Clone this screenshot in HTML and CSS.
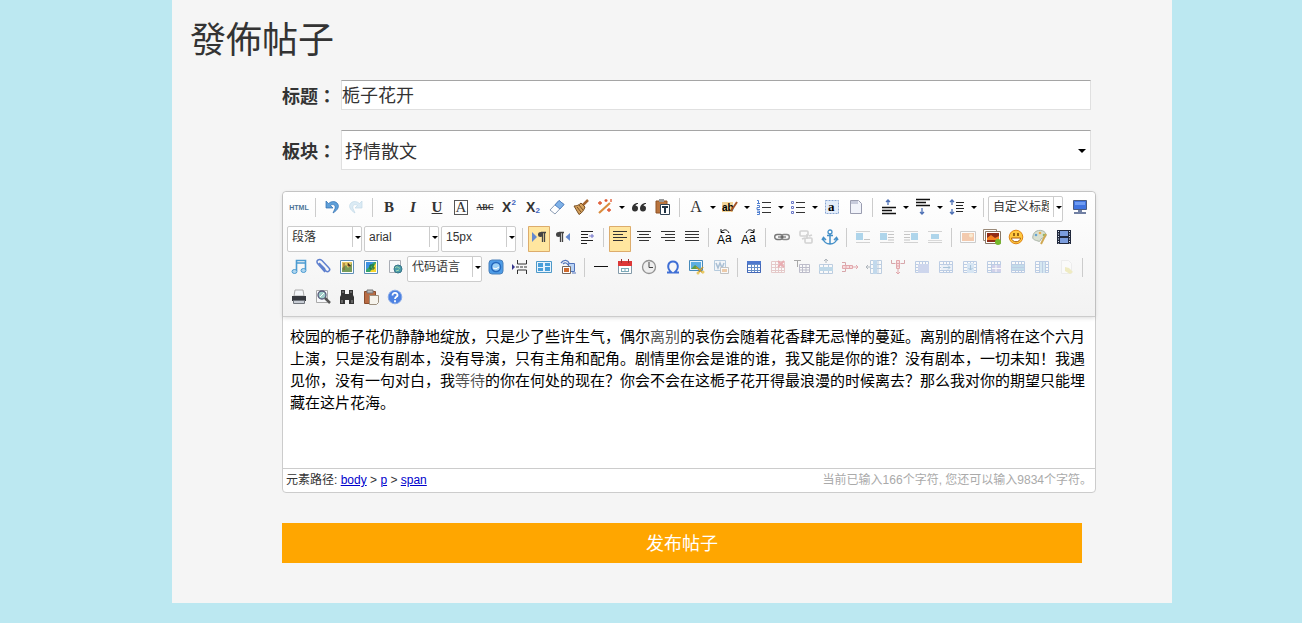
FILE: index.html
```html
<!DOCTYPE html>
<html lang="zh-CN">
<head>
<meta charset="utf-8">
<title>發佈帖子</title>
<link rel="stylesheet" href="styles.css">
</head>
<body>
<svg class="defs" aria-hidden="true">
  <symbol id="grid" viewBox="0 0 16 16"><path d="M1.500 2.500h13v11h-13zM1.500 5.500h13M1.500 8.500h13M1.500 11.500h13M5.500 3v11M8.500 3v11M11.500 3v11" fill="#fff" stroke="currentColor"/></symbol>
  <symbol id="wrapbox" viewBox="0 0 16 16"><path d="M1 2.500h14M1 13.500h14" stroke="#999"/></symbol>
</svg>
<main class="panel">
  <h1 class="title">發佈帖子</h1>
  <form class="form">
    <div class="field"><label class="label" lang="zh-TW" for="subject">标题：</label><input class="input" id="subject" type="text" value="栀子花开"></div>
    <div class="field">
      <label class="label" lang="zh-TW" for="board">板块：</label>
      <span class="board"><select class="board-select" id="board"><option>抒情散文</option></select></span>
    </div>
    <section class="editor">
      <div class="toolbar">
        <div class="row">
          <button type="button" class="btn html" title="源代码">HTML</button>
          <i class="sep"></i>
          <button type="button" class="btn" title="撤销"><svg viewBox="0 0 16 16"><path d="M2 2v7h7L6.500 6.500C9 4.500 12 6 11 9.500L9 14c5-3 7-7 4-10-3-2.500-6-1.500-8.500.5z" fill="#5f9fd8" stroke="#2f6fb0" stroke-width=".7"/></svg></button>
          <button type="button" class="btn off" title="重做"><svg viewBox="0 0 16 16"><path d="M14 2v7H7l2.500-2.500C7 4.500 4 6 5 9.500L7 14C2 11 0 7 3 4c3-2.500 6-1.500 8.500.5z" fill="#a9d0e8" stroke="#6ba5c8" stroke-width=".7"/></svg></button>
          <i class="sep"></i>
          <button type="button" class="btn glyph bold" title="加粗">B</button>
          <button type="button" class="btn glyph italic" title="斜体">I</button>
          <button type="button" class="btn glyph under" title="下划线">U</button>
          <button type="button" class="btn glyph" title="字符边框"><span class="framed">A</span></button>
          <button type="button" class="btn strike" title="删除线">ABC</button>
          <button type="button" class="btn script" title="上标">X<sup>2</sup></button>
          <button type="button" class="btn script" title="下标">X<sub>2</sub></button>
          <button type="button" class="btn" title="清除格式"><svg viewBox="0 0 16 16"><path d="M1 11l9-9.500 5 4L6 15z" fill="#fff" stroke="#8c9db5"/><path d="M6 6l4-4.500 5 4L11 10z" fill="#7fb2e8" stroke="#5585c5"/></svg></button>
          <button type="button" class="btn" title="格式刷"><svg viewBox="0 0 16 16"><path d="M15 1l-5 5" stroke="#a5652f" stroke-width="2.500"/><path d="M1 7c3 0 5-1 7-3l4 4c-1 3-3 6-6 7.500z" fill="#d5a15c" stroke="#7a5126"/><path d="M4 8l4 5M6 6l4 5" stroke="#7a5126"/></svg></button>
          <button type="button" class="btn" title="自动排版"><svg viewBox="0 0 16 16"><path d="M2 14L13 4" stroke="#d98b3d" stroke-width="2.200"/><path d="M3 2v4M1 4h4M9 0v3M7.500 1.500h3M12 9v4M10 11h4M14 0v3" stroke="#e0562f" stroke-width="1.300"/></svg></button><button type="button" class="drop" aria-label="排版选项"></button>
          <button type="button" class="btn" title="引用"><svg viewBox="0 0 16 16"><path d="M7 4C3 4 1 6.500 1 9.500a3 3 0 1 0 3.500-3C5 5.500 6 5 7 5zM15 4c-4 0-6 2.500-6 5.500a3 3 0 1 0 3.500-3c.5-1 1.500-1.500 2.500-1.500z" fill="#333"/></svg></button>
          <button type="button" class="btn" title="纯文本粘贴"><svg viewBox="0 0 16 16"><path d="M1 2h11v12H1z" fill="#b9743e" stroke="#8e5225"/><path d="M4 0h5v3H4z" fill="#999"/><path d="M5.500 5.500h9v10h-9z" fill="#fff" stroke="#345"/><path d="M7 8h6M10 8v6" stroke="#234" stroke-width="2"/></svg></button>
          <i class="sep"></i>
          <button type="button" class="btn glyph plain" title="字体颜色">A</button><button type="button" class="drop" aria-label="选择字体颜色"></button>
          <button type="button" class="btn" title="背景色"><svg viewBox="0 0 16 16"><rect y="3" width="11" height="10" fill="#f4d69a"/><text x="0" y="12" class="t-ab">ab</text><path d="M15 3L9 12" stroke="#a6562a" stroke-width="2"/></svg></button><button type="button" class="drop" aria-label="选择背景色"></button>
          <button type="button" class="btn" title="有序列表"><svg viewBox="0 0 16 16"><path d="M6 3.500h9M6 8.500h9M6 13.500h9" stroke="#333"/><path d="M1 1.500h1.500v3M1 4.500h3M1 6.500h2.500v2H1v2h3M1 12h2.500v3.500H1M1 13.500h2" fill="none" stroke="#4f7fd0"/></svg></button><button type="button" class="drop" aria-label="有序列表样式"></button>
          <button type="button" class="btn" title="无序列表"><svg viewBox="0 0 16 16"><path d="M6 3.500h9M6 8.500h9M6 13.500h9" stroke="#333"/><path d="M1.500 2.500h2v2h-2zM1.500 7.500h2v2h-2zM1.500 12.500h2v2h-2z" fill="#fff" stroke="#6b78c8"/></svg></button><button type="button" class="drop" aria-label="无序列表样式"></button>
          <button type="button" class="btn" title="全选"><svg viewBox="0 0 16 16"><path d="M1.500 1.500h13v13h-13z" fill="#e3edfa" stroke="#8ba6d3" stroke-dasharray="2 1"/><text x="4" y="12" class="t-a">a</text></svg></button>
          <button type="button" class="btn" title="清空文档"><svg viewBox="0 0 16 16"><path d="M2.500 1.500h8l3 3v10h-11z" fill="#f1f3fa" stroke="#9a9db0"/><path d="M3 2h7v3H3z" fill="#c7cbdc"/></svg></button>
          <i class="sep"></i>
          <button type="button" class="btn" title="段前距"><svg viewBox="0 0 16 16"><path d="M1 8.500h14M1 11.500h10M1 14.500h14" stroke="#111" stroke-width="1.300"/><path d="M7 6V1M5 3l2-2 2 2" fill="none" stroke="#4d70b5" stroke-width="1.300"/></svg></button><button type="button" class="drop" aria-label="段前距选项"></button>
          <button type="button" class="btn" title="段后距"><svg viewBox="0 0 16 16"><path d="M1 .5h14M1 3.500h10M1 6.500h14" stroke="#111" stroke-width="1.300"/><path d="M7 9v6M5 13l2 2 2-2" fill="none" stroke="#4d70b5" stroke-width="1.300"/></svg></button><button type="button" class="drop" aria-label="段后距选项"></button>
          <button type="button" class="btn" title="行间距"><svg viewBox="0 0 16 16"><path d="M7 3.500h8M7 6.500h7M7 9.500h8M7 12.500h7" stroke="#222"/><path d="M3 1v5M3 10v5M1 3l2-2 2 2M1 13l2 2 2-2" fill="none" stroke="#4d70b5" stroke-width="1.300"/></svg></button><button type="button" class="drop" aria-label="行间距选项"></button>
          <i class="sep"></i>
          <span class="combo"><select aria-label="自定义标题"><option>自定义标题</option></select></span>
          <button type="button" class="btn last" title="全屏"><svg viewBox="0 0 16 16"><path d="M1.500 1.500h13v9h-13z" fill="#3f73e0" stroke="#4b5b80"/><path d="M3 3h10v3H3z" fill="#6f9cf3"/><path d="M6 11h4v2H6zM2 13h12v2H2z" fill="#7180a3"/></svg></button>
        </div>
        <div class="row">
          <span class="combo"><select aria-label="段落格式"><option>段落</option></select></span>
          <span class="combo"><select aria-label="字体"><option>arial</option></select></span>
          <span class="combo"><select aria-label="字号"><option>15px</option></select></span>
          <i class="sep"></i>
          <button type="button" class="btn on" title="从左向右输入"><svg viewBox="0 0 16 16"><path d="M1 3l5 5-5 5z" fill="#6489ce"/><path d="M15 3.500H10M11.500 3v10M13.500 3v10" stroke="#444" stroke-width="1.300"/><circle cx="9.500" cy="5.500" r="2.500" fill="#444"/></svg></button>
          <button type="button" class="btn" title="从右向左输入"><svg viewBox="0 0 16 16"><path d="M15 4l-4.500 4 4.500 4z" fill="#6489ce"/><path d="M9 3.500H4M5.500 3v10M7.500 3v10" stroke="#444" stroke-width="1.300"/><circle cx="3.500" cy="5.500" r="2.500" fill="#444"/></svg></button>
          <button type="button" class="btn" title="首行缩进"><svg viewBox="0 0 16 16"><path d="M2 2.500h12M2 5.500h7M2 8.500h7M2 11.500h12M2 14.500h6" stroke="#222"/><path d="M10 7h5M13 5v4" stroke="#7073c9"/></svg></button>
          <i class="sep"></i>
          <button type="button" class="btn on" title="居左对齐"><svg viewBox="0 0 16 16"><path d="M1 2.500h14M1 5.500h10M1 8.500h14M1 11.500h10" stroke="#333"/></svg></button>
          <button type="button" class="btn" title="居中对齐"><svg viewBox="0 0 16 16"><path d="M1 2.500h14M3 5.500h10M1 8.500h14M3 11.500h10" stroke="#333"/></svg></button>
          <button type="button" class="btn" title="居右对齐"><svg viewBox="0 0 16 16"><path d="M1 2.500h14M5 5.500h10M1 8.500h14M5 11.500h10" stroke="#333"/></svg></button>
          <button type="button" class="btn" title="两端对齐"><svg viewBox="0 0 16 16"><path d="M1 2.500h14M1 5.500h14M1 8.500h14M1 11.500h14" stroke="#333"/></svg></button>
          <i class="sep"></i>
          <button type="button" class="btn" title="字母大写"><svg viewBox="0 0 16 16"><text x="0" y="15" class="t-case">A</text><text x="8" y="13" class="t-case">a</text><path d="M12 4C10 0 7 0 4 3M4 0v3.500h3.500" fill="none" stroke="#111"/></svg></button>
          <button type="button" class="btn" title="字母小写"><svg viewBox="0 0 16 16"><text x="0" y="15" class="t-case">A</text><text x="8" y="13" class="t-case">a</text><path d="M5 4C7 0 10 0 13 3M13 0v3.500H9.500" fill="none" stroke="#111"/></svg></button>
          <i class="sep"></i>
          <button type="button" class="btn" title="超链接"><svg viewBox="0 0 16 16"><rect x=".7" y="5.500" width="8" height="5" rx="2.500" fill="none" stroke="#777" stroke-width="1.400"/><rect x="7.300" y="5.500" width="8" height="5" rx="2.500" fill="none" stroke="#888" stroke-width="1.400"/><path d="M4 8h8" stroke="#555"/></svg></button>
          <button type="button" class="btn off" title="取消链接"><svg viewBox="0 0 16 16"><rect x="2" y="2" width="8" height="5" rx="1" fill="none" stroke="#999" stroke-width="1.600"/><rect x="7" y="9" width="7" height="5" rx="1" fill="none" stroke="#999" stroke-width="1.600"/><path d="M9 5v5M11 7l3-1M4 10l3-1" stroke="#999" stroke-width="1.600"/></svg></button>
          <button type="button" class="btn" title="锚点"><svg viewBox="0 0 16 16"><path d="M8 5v10M5 6.500h6M1 9c1 8 13 8 14 0M0 11l1.500-2.500L4 11M12 11l2.500-2.500L16 11" fill="none" stroke="#4590c8" stroke-width="1.500"/><circle cx="8" cy="3" r="2" fill="#fff" stroke="#4590c8" stroke-width="1.300"/></svg></button>
          <i class="sep"></i>
          <button type="button" class="btn off" title="默认浮动"><svg viewBox="0 0 16 16"><use href="#wrapbox"/><path d="M1 4h7v7H1z" fill="#3f9fd5"/><path d="M9 10.500h6" stroke="#777"/></svg></button>
          <button type="button" class="btn off" title="左浮动"><svg viewBox="0 0 16 16"><use href="#wrapbox"/><path d="M1 4h7v7H1z" fill="#3f9fd5"/><path d="M9 5.500h6M9 8.500h6M9 11h6" stroke="#777"/></svg></button>
          <button type="button" class="btn off" title="右浮动"><svg viewBox="0 0 16 16"><use href="#wrapbox"/><path d="M8 4h7v7H8z" fill="#3f9fd5"/><path d="M1 5.500h6M1 8.500h6M1 11h6" stroke="#777"/></svg></button>
          <button type="button" class="btn off" title="居中"><svg viewBox="0 0 16 16"><use href="#wrapbox"/><path d="M4 5h8v5H4z" fill="#3f9fd5"/><path d="M1 11.500h14" stroke="#aaa"/></svg></button>
          <i class="sep"></i>
          <button type="button" class="btn off" title="单图上传"><svg viewBox="0 0 16 16"><path d="M.5 2.500h15v11H.5z" fill="#fff" stroke="#888"/><path d="M2 4h12v8H2z" fill="#e9843f"/><circle cx="11" cy="6.500" r="2" fill="#f8d393"/></svg></button>
          <button type="button" class="btn" title="多图上传"><svg viewBox="0 0 16 16"><path d="M-.5 .5h13v11h-13z" fill="#fff" stroke="#987"/><path d="M1.500 2.500h15v12h-15z" fill="#fff" stroke="#876"/><path d="M3 4h12v9H3z" fill="#922c16"/><path d="M3 9l4-3 4 3 4-2v4H3z" fill="#f58220"/><circle cx="14" cy="13" r="3" fill="#75b82b"/></svg></button>
          <button type="button" class="btn" title="表情"><svg viewBox="0 0 16 16"><circle cx="8" cy="8" r="6.800" fill="#ffc83e" stroke="#df8515"/><path d="M3.500 9h9c-.5 5-8.500 5-9 0z" fill="#fff" stroke="#aa5c08"/><path d="M6 4v3M10 4v3" stroke="#754304" stroke-width="1.500"/></svg></button>
          <button type="button" class="btn" title="涂鸦"><svg viewBox="0 0 16 16"><path d="M1 7c1-8 14-7 13 0-1 3-4 1-5 3s-1 3-3 2C2 11 0 10 1 7z" fill="#d9e0d0" stroke="#aab4a7"/><circle cx="4" cy="6" r="1.300" fill="#66a3d2"/><circle cx="8" cy="4" r="1.300" fill="#edae4e"/><circle cx="12" cy="6" r="1.300" fill="#8fb86a"/><path d="M14 5L9 15" stroke="#d0a953" stroke-width="2"/></svg></button>
          <button type="button" class="btn" title="视频"><svg viewBox="0 0 16 16"><path d="M1 1h14v14H1z" fill="#20283c"/><path d="M4 2h8v5H4zM4 9h8v5H4z" fill="#7b9ddd"/><path d="M2.500 2v13M13.500 2v13" stroke="#dfe6f3" stroke-dasharray="1 1.500"/></svg></button>
        </div>
        <div class="row">
          <button type="button" class="btn" title="音乐"><svg viewBox="0 0 16 16"><path d="M5.500 12V1.500h9V11M5.500 4h9" fill="none" stroke="#4b9bd1" stroke-width="1.600"/><ellipse cx="3.500" cy="12.500" rx="2.500" ry="2" fill="#aed5ef" stroke="#4b9bd1"/><ellipse cx="12.500" cy="11.500" rx="2.500" ry="2" fill="#aed5ef" stroke="#4b9bd1"/></svg></button>
          <button type="button" class="btn" title="附件"><svg viewBox="0 0 16 16"><path d="M5 5l6 7c2 2 5-1 3-3L7 1.500C4-1 0 2 3 5l7 8M4 4l6 6" fill="none" stroke="#5f80ce" stroke-width="1.500"/></svg></button>
          <button type="button" class="btn" title="地图"><svg viewBox="0 0 16 16"><path d="M1.500 1.500h13v13h-13z" fill="#fff" stroke="#5e8eb8"/><path d="M3 3h10v10H3z" fill="#e4c967"/><path d="M3 9l4-3 2 3 4-5v9H3z" fill="#799c58"/><path d="M5 4v7M9 4v3h3" stroke="#8d5a2c"/></svg></button>
          <button type="button" class="btn" title="谷歌地图"><svg viewBox="0 0 16 16"><path d="M1.500 1.500h13v13h-13z" fill="#fff" stroke="#5e8eb8"/><path d="M3 3h10v10H3z" fill="#37a66a"/><path d="M3 3h8L3 11z" fill="#3e92e3"/><path d="M13 4v9H7z" fill="#f5d52e"/><path d="M11 6H7v4h4V8H9" fill="none" stroke="#186635"/></svg></button>
          <button type="button" class="btn" title="插入框架"><svg viewBox="0 0 16 16"><path d="M2.500 1.500h11v12h-11z" fill="#f7f8fb" stroke="#a9adb5"/><circle cx="11" cy="10" r="4" fill="#4b9caa" stroke="#38758a"/><path d="M8 9c2-3 4 1 5 0M9 12l3-1" fill="none" stroke="#a9dfb1"/></svg></button>
          <span class="combo"><select aria-label="代码语言"><option>代码语言</option></select></span>
          <button type="button" class="btn" title="百度应用"><svg viewBox="0 0 16 16"><rect x="1" y="1" width="14" height="14" rx="3" fill="#4d9be6" stroke="#4a80ba"/><circle cx="8" cy="8" r="4.500" fill="#9bd0f6" stroke="#2468bd" stroke-width="1.500"/><path d="M5 9q3 2 6-1" fill="none" stroke="#fff"/></svg></button>
          <button type="button" class="btn" title="分页"><svg viewBox="0 0 16 16"><path d="M5.500 1v4h9V1M5.500 15v-4h9v4" fill="none" stroke="#333"/><path d="M4 8h11" stroke="#333" stroke-dasharray="3 1"/><path d="M0 5l3 3-3 3z" fill="#37378d"/></svg></button>
          <button type="button" class="btn" title="模板"><svg viewBox="0 0 16 16"><path d="M.5 2.500h15v11H.5z" fill="#e8f3fd" stroke="#4d99c8"/><path d="M2 4h5v4H2zM9 4h5v3H9zM2 9h5v3H2zM9 8h5v4H9z" fill="#499fda"/></svg></button>
          <button type="button" class="btn" title="背景"><svg viewBox="0 0 16 16"><path d="M1 4c3-4 7-3 8 0M3 5c2-2 4-1 5 1" fill="none" stroke="#5275bb" stroke-width="1.300"/><path d="M8.500 4.500h6v8h-6z" fill="#b9d3f5" stroke="#5275bb"/><path d="M2.500 7.500h8v7h-8z" fill="#fff" stroke="#76685f"/><path d="M4 9h5v4H4z" fill="#d06b2e"/><path d="M12 14h4" stroke="#5275bb"/></svg></button>
          <i class="sep"></i>
          <button type="button" class="btn" title="分隔线"><svg viewBox="0 0 16 16"><path d="M1 7.500h14" stroke="#111"/></svg></button>
          <button type="button" class="btn" title="日期"><svg viewBox="0 0 16 16"><path d="M1.500 2.500h13v12h-13z" fill="#fff" stroke="#839aa9"/><path d="M1 2h14v5H1z" fill="#dd3737"/><path d="M4.500 0v4M11.500 0v4" stroke="#963030"/><path d="M4 9.500h8M4 12.500h8M4.500 9v4M8 9v4M11.500 9v4" stroke="#7caab8"/></svg></button>
          <button type="button" class="btn" title="时间"><svg viewBox="0 0 16 16"><circle cx="8" cy="8" r="6.500" fill="#eee" stroke="#929292" stroke-width="1.300"/><path d="M8 3v5.500h4" fill="none" stroke="#444"/></svg></button>
          <button type="button" class="btn" title="特殊字符"><svg viewBox="0 0 16 16"><path d="M2 13.500h4.500C1 9 3 2.500 8 2.500s7 6.500 1.500 11H14" fill="none" stroke="#3f6fd5" stroke-width="2"/></svg></button>
          <button type="button" class="btn" title="截图"><svg viewBox="0 0 16 16"><path d="M.5 1.500h13v10H.5z" fill="#eaf3fb" stroke="#478abb"/><path d="M2 3h10v7H2z" fill="#5daee2"/><path d="M2 10l4-4 5 4z" fill="#5e9d46"/><path d="M7 8l7 6M14 8l-5 6" stroke="#c19530" stroke-width="1.500"/><circle cx="9" cy="14" r="1.500" fill="#e9ca63"/><circle cx="14" cy="13" r="1.500" fill="#e9ca63"/></svg></button>
          <button type="button" class="btn off" title="图片转存"><svg viewBox="0 0 16 16"><path d="M1.500 1.500h11v10h-11z" fill="#eef4fb" stroke="#558ab9"/><path d="M3 4l2 5 2-5 2 5 2-5" fill="none" stroke="#376da1" stroke-width="1.500"/><path d="M7.500 8.500h8v6h-8z" fill="#fff" stroke="#777"/><path d="M9 10h5v3H9z" fill="#df8b39"/></svg></button>
          <i class="sep"></i>
          <button type="button" class="btn blue" title="插入表格"><svg viewBox="0 0 16 16"><use href="#grid"/><path d="M1.500 2.500h13v11h-13z" fill="none" stroke="#4468b8"/><path d="M1 2h14v3H1z" fill="#4e79ce"/></svg></button>
          <button type="button" class="btn off red" title="删除表格"><svg viewBox="0 0 16 16"><use href="#grid"/><path d="M8 2l6 6M14 2L8 8" stroke="#d53f4b" stroke-width="1.800"/></svg></button>
          <button type="button" class="btn off" title="表格前插行"><svg viewBox="0 0 16 16"><path d="M0 1.500h7M3.500 1v7" stroke="#333"/><path d="M5.500 5.500h10v8h-10zM6 8.500h9M6 11h9M8.500 6v8M12 6v8" fill="#fff" stroke="#668"/></svg></button>
          <button type="button" class="btn off blue" title="前插入行"><svg viewBox="0 0 16 16"><path d="M1.500 5.500h13v9h-13zM5.500 5v10M10.500 5v10" fill="#fff" stroke="#668fbe"/><path d="M1 8h14v4H1z" fill="#6caad4"/><path d="M8 4V0M6 2l2-2 2 2" fill="none" stroke="#456"/></svg></button>
          <button type="button" class="btn off" title="删除行"><svg viewBox="0 0 16 16"><path d="M0 3.500h3.500v3M0 12.500h3.500v-3" fill="none" stroke="#a8303a"/><path d="M.5 6.500h10v3H.5zM4 6.500v3M7.500 6.500v3" fill="#f5b5b9" stroke="#c3323e"/><path d="M11 8h5M14 6l2 2-2 2" fill="none" stroke="#c3323e"/></svg></button>
          <button type="button" class="btn off" title="前插入列"><svg viewBox="0 0 16 16"><path d="M4.500 1.500h11v13h-11zM4 5.500h12M4 9.500h12M8 1v14M12 1v14" fill="#fff" stroke="#668fbe"/><path d="M7 1h4v14H7z" fill="#75addd"/><path d="M4 8H0M2 6L0 8l2 2" fill="none" stroke="#456"/></svg></button>
          <button type="button" class="btn off" title="删除列"><svg viewBox="0 0 16 16"><path d="M1.500 1v3.500h4M14.500 1v3.500h-4" fill="none" stroke="#a8303a"/><path d="M6.500 1.500h3v8h-3zM6.500 4.500h3M6.500 7h3" fill="#f5b5b9" stroke="#c3323e"/><path d="M8 10v5M6 13l2 2 2-2" fill="none" stroke="#c3323e"/></svg></button>
          <button type="button" class="btn off blue" title="合并单元格"><svg viewBox="0 0 16 16"><use href="#grid"/><path d="M4 5h11v9H4z" fill="#92a7df"/></svg></button>
          <button type="button" class="btn off blue" title="右合并单元格"><svg viewBox="0 0 16 16"><use href="#grid"/><path d="M3 6h11v5H3z" fill="#dbe7f9"/><path d="M5 8.500h7M10 6.500l2 2-2 2" fill="none" stroke="#3577ae"/></svg></button>
          <button type="button" class="btn off blue" title="下合并单元格"><svg viewBox="0 0 16 16"><use href="#grid"/><path d="M5 4h7v10H5z" fill="#a9cdf0"/><path d="M8.500 6v5M6.500 9l2 2 2-2" fill="none" stroke="#3577ae"/></svg></button>
          <button type="button" class="btn off blue" title="完全拆分单元格"><svg viewBox="0 0 16 16"><use href="#grid"/><path d="M6 6h9v7H6z" fill="#9b9bd8"/><path d="M10 6v7M6 9.500h9" stroke="#fff"/></svg></button>
          <button type="button" class="btn off blue" title="拆分成行"><svg viewBox="0 0 16 16"><use href="#grid"/><path d="M2 6h12v2H2zM2 9h12v2H2z" fill="#76b5d9"/></svg></button>
          <button type="button" class="btn off blue" title="拆分成列"><svg viewBox="0 0 16 16"><use href="#grid"/><path d="M6 3h2v11H6zM9 3h2v11H9z" fill="#a4d0e9"/></svg></button>
          <button type="button" class="btn off" title="图表"><svg viewBox="0 0 16 16"><path d="M3.500 1.500h7l3 3v10h-10z" fill="#fff" stroke="#ddd"/><path d="M7 8l4 1 4 4-3 2-5-3z" fill="#e5db74"/></svg></button>
          <i class="sep"></i>
        </div>
        <div class="row">
          <button type="button" class="btn" title="打印"><svg viewBox="0 0 16 16"><path d="M4 1h8l1 6H3z" fill="#f3f5f8" stroke="#aaa"/><path d="M1 7h14v5H1z" fill="#35383e"/><path d="M2.500 11.500h11v3h-11z" fill="#c8cdd5" stroke="#70757c"/></svg></button>
          <button type="button" class="btn" title="预览"><svg viewBox="0 0 16 16"><path d="M1.500 1.500h11v12h-11z" fill="#f7f8fa" stroke="#aaa"/><circle cx="7" cy="6" r="4" fill="#9fcdc9" stroke="#557" stroke-width="1.300"/><path d="M10 9l5 5" stroke="#555" stroke-width="2.500"/><path d="M5 8l4-4" stroke="#fff"/></svg></button>
          <button type="button" class="btn" title="查询替换"><svg viewBox="0 0 16 16"><path d="M2 1h4v4h4V1h4v5l1 2v7h-5v-4H6v4H1V8l1-2z" fill="#333"/><path d="M3 11v3M13 11v3M4 2v2M12 2v2" stroke="#999"/></svg></button>
          <button type="button" class="btn" title="粘贴"><svg viewBox="0 0 16 16"><path d="M1.500 2.500h11v12h-11z" fill="#b86b43" stroke="#8a4c2c"/><path d="M4 1h6v3H4z" fill="#bbb" stroke="#777"/><path d="M6.500 6.500h9v7l-2 2h-7z" fill="#f6f3ec" stroke="#9c8f7d"/></svg></button>
          <button type="button" class="btn" title="帮助"><svg viewBox="0 0 16 16"><circle cx="8" cy="8" r="6.800" fill="#4d82e2" stroke="#88aae8"/><path d="M5.500 6.500c0-4 5.500-3 5 0-.2 1.300-2.500 1.500-2.500 3.500M8 11.300v2" fill="none" stroke="#fff" stroke-width="1.800"/></svg></button>
        </div>
      </div>
      <div class="content" contenteditable="true" role="textbox" aria-label="帖子内容">校园的栀子花仍静静地绽放，只是少了些许生气，偶尔<span class="soft">离别</span>的哀伤会随着花香肆无忌惮的蔓延。离别的剧情将在这个六月上演，只是没有剧本，没有导演，只有主角和配角。剧情里你会是谁的谁，我又能是你的谁？没有剧本，一切未知！我遇见你，没有一句对白，我<span class="soft">等待</span>的你在何处的现在？你会不会在这栀子花开得最浪漫的时候离去？那么我对你的期望只能埋藏在这片花海。</div>
      <div class="status">
        <div>元素路径: <a href="#body">body</a> &gt; <a href="#p">p</a> &gt; <a href="#span">span</a></div>
        <div class="count">当前已输入166个字符, 您还可以输入9834个字符。</div>
      </div>
    </section>
    <button class="submit" type="submit">发布帖子</button>
  </form>
</main>
</body>
</html>
```
FILE: styles.css
```css
* { box-sizing: border-box; }

body {
  margin: 0;
  padding: 0 0 20px 42px;
  background: #bce8f1;
  color: #333;
  font-family: "Liberation Sans", "Noto Sans CJK SC", sans-serif;
}

.defs { display: none; }

.panel {
  max-width: 1000px;
  margin: 0 auto;
  padding: 20px 0 40px;
  background: #f5f5f5;
}

.title {
  margin: 0;
  padding: 1px 0 19px 18px;
  font-size: 36px;
  font-weight: 400;
  line-height: 40px;
}

.form {
  display: flex;
  flex-direction: column;
  gap: 20px;
  padding: 0 76px 0 110px;
}

.field {
  display: flex;
  align-items: center;
  gap: 5px;
  margin-right: 5px;
}

.label {
  flex: none;
  font: 700 18px/28px "Noto Sans CJK TC", sans-serif;
}

.input,
.board-select {
  width: 100%;
  border: 1px solid #e0e0e0;
  border-top-color: #a5a5a5;
  border-radius: 0;
  background: #fff;
  color: #333;
  font: 18px "Noto Sans CJK SC", sans-serif;
}

.input {
  flex: 1;
  min-width: 0;
  height: 30px;
  padding: 0 0 2px;
}

.board {
  position: relative;
  flex: 1;
}

.board-select {
  display: block;
  height: 40px;
  padding: 0 20px 0 3px;
  appearance: none;
}

.board::after,
.combo::after,
.drop::after {
  content: "";
  border: 3px solid transparent;
  border-top: 3px solid #000;
  border-bottom: 0;
  pointer-events: none;
}

.board::after {
  position: absolute;
  top: 19px;
  right: 5px;
  border-width: 4px 4px 0;
}

.editor {
  margin-top: 1px;
  border: 1px solid #ccc;
  border-radius: 4px;
  background: #fff;
}

.toolbar {
  display: flex;
  flex-direction: column;
  gap: 4px;
  padding: 4px 3px 4px 4px;
  border-bottom: 1px solid #ccc;
  border-radius: 4px 4px 0 0;
  background: linear-gradient(#fff, #f2f2f2);
  box-shadow: 0 1px 4px rgba(0, 0, 0, .15);
}

.row {
  display: flex;
  flex-wrap: wrap;
  align-items: flex-start;
}

.btn {
  display: flex;
  align-items: center;
  justify-content: center;
  width: 22px;
  height: 26px;
  margin: 0 1px;
  padding: 0 0 4px;
  border: 0;
  background: none;
  color: #333;
}

.btn svg {
  flex: none;
  width: 16px;
  height: 16px;
  overflow: visible;
}

.btn.on {
  border-radius: 1px;
  background: #ffe69f;
  box-shadow: inset 0 0 0 1px #dcac6c;
}

.off svg { opacity: .4; }
.blue { color: #668fc8; }
.red { color: #c88; }
.last { margin-left: auto; }

.html {
  color: #4b7397;
  font: 700 7px "Liberation Sans", sans-serif;
}

.glyph { font: 700 15px "Liberation Serif", serif; }
.italic { font-style: italic; }
.under { text-decoration: underline; }
.plain { font-size: 16px; font-weight: 400; }

.framed {
  width: 14px;
  border: 1px solid #555;
  font-weight: 400;
  line-height: 13px;
}

.strike {
  font: 700 8px "Liberation Serif", serif;
  text-decoration: line-through;
}

.script { font: 700 14px/16px "Liberation Sans", sans-serif; }

.script sup,
.script sub {
  height: 16px;
  color: #3f66bd;
  font-size: 8px;
  line-height: 8px;
}

.script sub { padding-top: 8px; }

.t-ab { font: 700 10px "Liberation Sans", sans-serif; }
.t-a { font: 700 13px "Liberation Serif", serif; }
.t-case { font: 12px "Liberation Sans", sans-serif; }

.sep {
  width: 1px;
  height: 19px;
  margin: 2px 4px;
  background: #ccc;
}

.drop {
  display: flex;
  align-items: center;
  justify-content: center;
  width: 10px;
  height: 23px;
  padding: 0;
  border: 0;
  background: none;
}

.combo {
  position: relative;
  width: 75px;
  margin-right: 2px;
}

.combo select {
  display: block;
  width: 100%;
  height: 26px;
  padding: 0 13px 4px 4px;
  border: 1px solid #ccc;
  border-radius: 2px;
  background: linear-gradient(#ccc, #ccc) right 8px top 0 / 1px 20px no-repeat #fff;
  color: #333;
  font: 12px "Liberation Sans", "Noto Sans CJK SC", sans-serif;
  appearance: none;
}

.combo::after {
  position: absolute;
  top: 10px;
  right: 1px;
}

.content {
  min-height: 151px;
  padding: 8px 7px;
  color: #000;
  font: 15px/22px "Noto Sans CJK SC", sans-serif;
}

.soft { color: #555; }

.status {
  display: flex;
  flex-wrap: wrap;
  justify-content: space-between;
  padding: 0 3px;
  border-top: 1px solid #ccc;
  font-size: 12px;
  line-height: 23px;
}

.status a { color: #00c; }
.count { color: #aaa; }

.submit {
  height: 40px;
  margin: 10px 14px 0 0;
  padding: 0 0 2px;
  border: 0;
  background: #ffa600;
  color: #fff;
  font: 18px "Noto Sans CJK SC", sans-serif;
}
```
